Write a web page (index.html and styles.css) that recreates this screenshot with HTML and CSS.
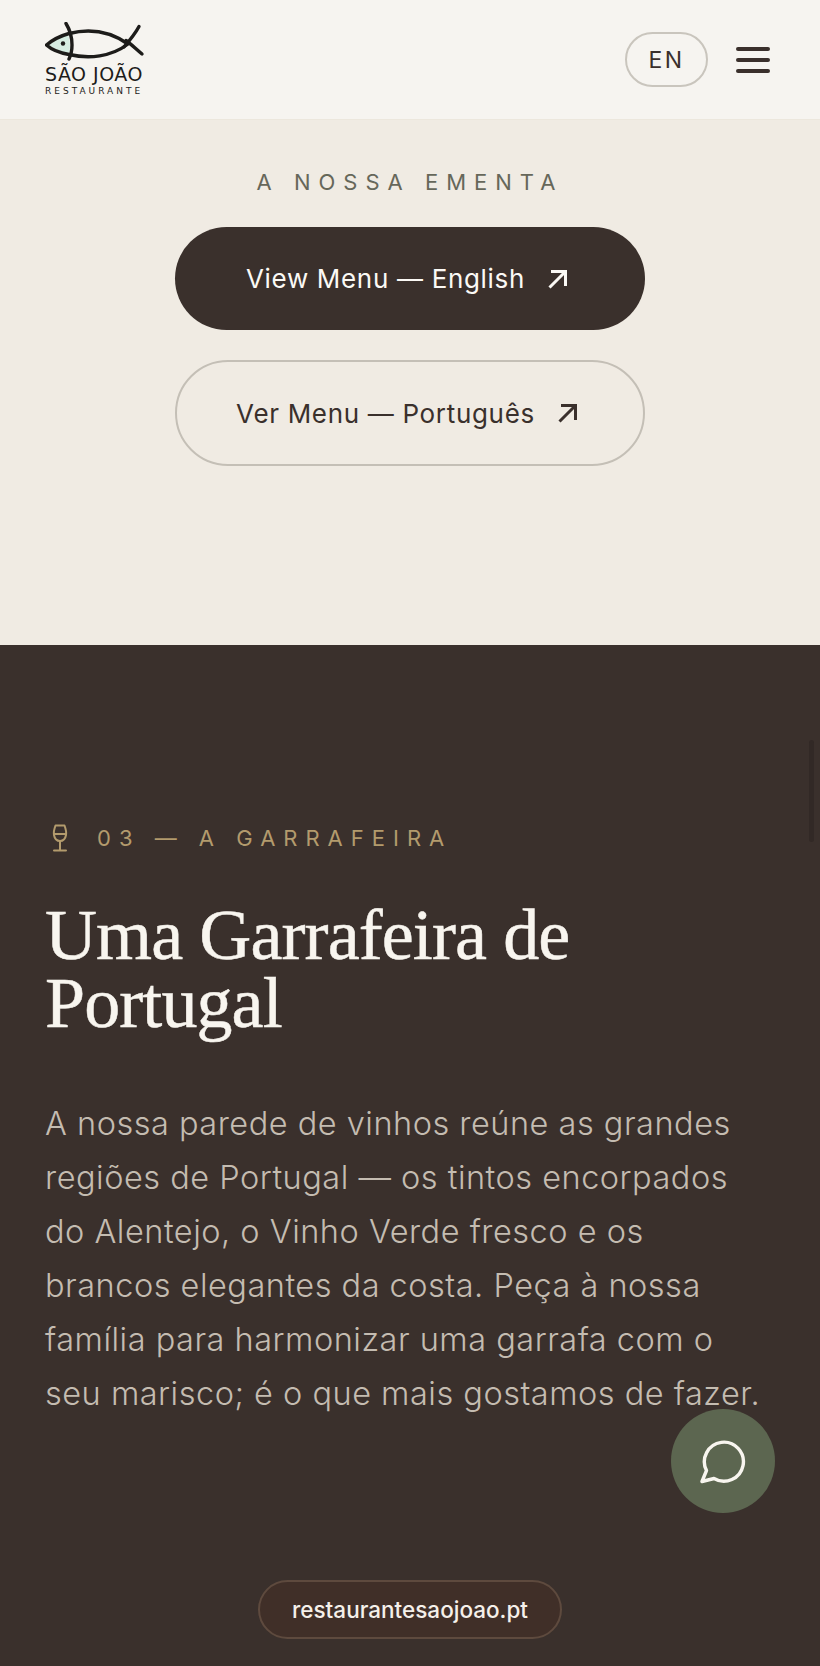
FILE: index.html
```html
<!DOCTYPE html>
<html lang="pt">
<head>
    <meta charset="UTF-8">
    <title>São João Restaurante</title>
    <link rel="stylesheet" href="styles.css">
</head>
<body>
<div class="page">
    <header class="topbar">
        <a class="logo" href="#">
            <svg class="logo_fish" viewBox="0 0 100 40" width="100" height="40" fill="none" stroke="#1d1c1a" stroke-linecap="round" stroke-linejoin="round">
                <path d="M1.500 22.500 L22 12 C24 14 25 20 25 24 C25 28 24 31 22.500 33 Z" fill="#d6ede2" stroke="none"/>
                <path d="M1.500 23 C8 17.500 15 14 24 11.500 C46 6 66 10 83 22 C66 35 44 37 24 32.500 C15 31 7 28 1.500 23 Z" stroke-width="3.400"/>
                <path d="M21 1.500 C25 8 27 15 27 23 C27 29 26 33 24 37" stroke-width="3.400"/>
                <path d="M94 4.500 C90 12 85 18 79 25" stroke-width="3.400"/>
                <path d="M81 18.500 C86 22 91 27 97 32" stroke-width="3.400"/>
                <circle cx="18" cy="21.500" r="2.200" fill="#1d1c1a" stroke="none"/>
            </svg>
            <span class="logo_name">SÃO JOÃO</span>
            <span class="logo_sub">RESTAURANTE</span>
        </a>
        <div class="topbar_right">
            <div class="langbtn">EN</div>
            <div class="burger"><span></span><span></span><span></span></div>
        </div>
    </header>

    <section class="menusection">
        <div class="menulabel">A NOSSA EMENTA</div>
        <a class="menubtn menubtn_dark" href="#">
            View Menu — English
            <svg class="arrow" viewBox="0 0 20 20" width="20" height="20" fill="none" stroke="currentColor" stroke-width="3"><path d="M1.500 18.500 L17 3 M3 2.500 H17.500 V17"/></svg>
        </a>
        <a class="menubtn menubtn_line" href="#">
            Ver Menu — Português
            <svg class="arrow" viewBox="0 0 20 20" width="20" height="20" fill="none" stroke="currentColor" stroke-width="3"><path d="M1.500 18.500 L17 3 M3 2.500 H17.500 V17"/></svg>
        </a>
    </section>

    <section class="winesection">
        <div class="eyebrow">
            <svg viewBox="0 0 16 28" width="16" height="28" fill="none" stroke="#b39b6d" stroke-width="2" stroke-linecap="round" stroke-linejoin="round">
                <path d="M3.500 1.500 H12.500 C13.800 5 14.500 8.500 14 11 C13.300 15 11 17 8 17 C5 17 2.700 15 2 11 C1.500 8.500 2.200 5 3.500 1.500 Z"/>
                <path d="M2.300 10 H13.700 M8 17 V26.500 M2 26.500 H14"/>
            </svg>
            <span>03 — A GARRAFEIRA</span>
        </div>
        <h2 class="winetitle">Uma Garrafeira de<br>Portugal</h2>
        <p class="winetext">A nossa parede de vinhos reúne as grandes<br>regiões de Portugal — os tintos encorpados<br>do Alentejo, o Vinho Verde fresco e os<br>brancos elegantes da costa. Peça à nossa<br>família para harmonizar uma garrafa com o<br>seu marisco; é o que mais gostamos de fazer.</p>
    </section>

    <div class="scrollthumb"></div>
    <div class="chatbtn">
        <svg viewBox="0 0 48 48" width="48" height="48" fill="none" stroke="#f8f5ef" stroke-width="3.400" stroke-linejoin="round"><path d="M3 44.500 L7.500 33.500 A19.500 19.500 0 1 1 15 41.500 Z"/></svg>
    </div>
    <div class="urlpill">restaurantesaojoao.pt</div>
</div>
</body>
</html>
```

FILE: styles.css
```css
*{
    box-sizing: border-box;
}

body{
    margin: 0;
    font-family: "Inter", "Liberation Sans", sans-serif;
}

a{
    text-decoration: none;
    color: inherit;
}

.page{
    position: relative;
    width: 820px;
    height: 1666px;
    overflow: hidden;
    background: #3a302c;
}

.topbar{
    height: 120px;
    padding: 0 50px 0 45px;
    display: flex;
    align-items: center;
    justify-content: space-between;
    background: #f6f4f0;
    border-bottom: 1px solid #ece7dd;
}

.logo{
    display: flex;
    flex-direction: column;
    color: #1d1c1a;
    width: 100px;
}

.logo_name{
    margin-top: 1px;
    font-family: "DejaVu Sans", sans-serif;
    font-weight: 400;
    font-size: 19px;
    line-height: 22px;
    letter-spacing: 0.5px;
    white-space: nowrap;
}

.logo_sub{
    font-family: "DejaVu Sans", sans-serif;
    font-size: 9px;
    line-height: 12px;
    letter-spacing: 3px;
    white-space: nowrap;
}

.topbar_right{
    display: flex;
    align-items: center;
    gap: 28px;
}

.langbtn{
    width: 83px;
    height: 55px;
    border: 2px solid #c9c5bd;
    border-radius: 28px;
    display: flex;
    align-items: center;
    justify-content: center;
    font-size: 23px;
    letter-spacing: 2.500px;
    color: #3a302c;
}

.burger{
    width: 34px;
    display: flex;
    flex-direction: column;
    gap: 7px;
}

.burger span{
    height: 4px;
    border-radius: 2px;
    background: #3a302c;
}

.menusection{
    height: 525px;
    padding-top: 49px;
    display: flex;
    flex-direction: column;
    align-items: center;
    background: #f0ebe3;
}

.menulabel{
    height: 26px;
    line-height: 26px;
    font-size: 22px;
    letter-spacing: 8px;
    color: #66675a;
    margin-bottom: 32px;
}

.menubtn{
    width: 470px;
    border-radius: 53px;
    padding-right: 6px;
    display: flex;
    align-items: center;
    justify-content: center;
    gap: 23px;
    font-size: 26px;
    letter-spacing: 0.680px;
}

.menubtn_dark{
    height: 103px;
    background: #3a302c;
    color: #fbf9f5;
    margin-bottom: 30px;
}

.menubtn_line{
    height: 106px;
    border: 2px solid #c4bfb6;
    color: #3a302c;
}

.winesection{
    padding: 179px 45px 0;
}

.eyebrow{
    display: flex;
    align-items: center;
    gap: 29px;
    padding-left: 7px;
    height: 28px;
    font-size: 22px;
    letter-spacing: 8px;
    color: #b39b6d;
    white-space: nowrap;
}

.winetitle{
    margin: 49px 0 0;
    font-family: "Liberation Serif", serif;
    font-weight: 400;
    font-size: 72px;
    line-height: 68px;
    letter-spacing: -0.9px;
    -webkit-text-stroke: 0.5px #f8f5ef;
    color: #f8f5ef;
}

.winetext{
    margin: 60px 0 0;
    font-weight: 300;
    font-size: 32.500px;
    line-height: 54px;
    letter-spacing: 0.500px;
    color: #c4bcb1;
    white-space: nowrap;
}

.scrollthumb{
    position: absolute;
    top: 740px;
    right: 6px;
    width: 5px;
    height: 102px;
    border-radius: 3px;
    background: #322926;
}

.chatbtn{
    position: absolute;
    left: 671px;
    top: 1409px;
    width: 104px;
    height: 104px;
    border-radius: 50%;
    background: #5c6650;
    display: flex;
    align-items: center;
    justify-content: center;
}

.urlpill{
    position: absolute;
    left: 258px;
    top: 1580px;
    width: 304px;
    height: 59px;
    border: 2px solid #5e4a3e;
    border-radius: 30px;
    background: #402f28;
    display: flex;
    align-items: center;
    justify-content: center;
    font-size: 22.500px;
    font-weight: 500;
    color: #f5f0ea;
}
```
